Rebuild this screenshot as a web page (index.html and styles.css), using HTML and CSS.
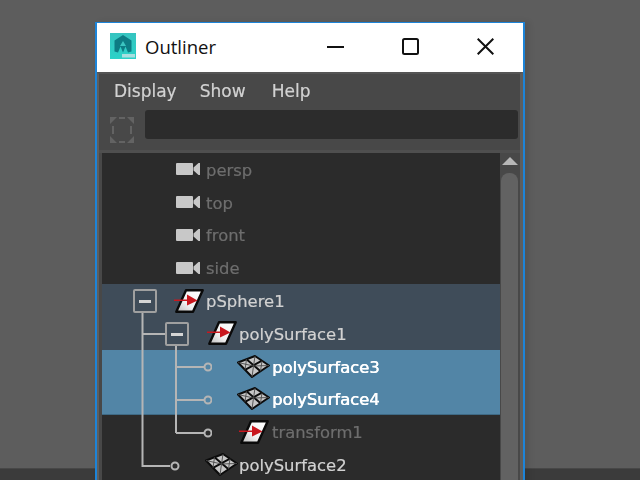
FILE: index.html
```html
<!DOCTYPE html>
<html lang="en">
<head>
<meta charset="utf-8">
<title>Outliner</title>
<link rel="stylesheet" href="styles.css">
</head>
<body>
<div class="desktop">
  <div class="floor"></div>
  <section class="window">
    <header class="titlebar">
      <svg class="app-icon" viewBox="0 0 26 26">
        <defs><linearGradient id="teal" x1="0" y1="0" x2="0" y2="1"><stop offset="0" stop-color="#36c4c0"/><stop offset="1" stop-color="#2bd2c8"/></linearGradient></defs>
        <rect width="26" height="26" fill="url(#teal)"/>
        <path d="M13 2l8.500 5.500v11l-3.500 1-2.500-6-2.500 6-2.500-6-2.500 6-3.500-1v-11z" fill="#0d7c84"/>
        <path d="M13 8l3 5h-6z" fill="#3cc4c0"/>
        <rect x="12" y="21" width="13" height="3.500" fill="#a9dfe0"/>
      </svg>
      <span class="title">Outliner</span>
      <div class="controls">
        <svg class="ctl" viewBox="0 0 17 17"><path d="M0 9h17"/></svg>
        <svg class="ctl" viewBox="0 0 17 17"><rect x="1" y="1" width="15" height="15" rx="1.500"/></svg>
        <svg class="ctl" viewBox="0 0 17 17"><path d="M.7.700l15.600 15.600M16.300.700L.7 16.300"/></svg>
      </div>
    </header>
    <div class="panel">
      <nav class="menu"><span>Display</span><span class="menu-wide">Show</span><span>Help</span></nav>
      <div class="filter">
        <svg class="filter-icon" viewBox="0 0 24 26">
          <path class="fi-t" d="M0 0h7L0 7zM24 0v7L17 0zM0 26v-7l7 7zM24 26h-7l7-7z"/>
          <path class="fi-l" d="M3 9v8M21 9v8M9 1h6M9 25h6"/>
        </svg>
        <div class="search"></div>
      </div>
      <div class="body">
        <div class="tree">
          <div class="row cam-row dim"><svg class="cam"><use href="#camera"/></svg><span>persp</span></div>
          <div class="row cam-row dim"><svg class="cam"><use href="#camera"/></svg><span>top</span></div>
          <div class="row cam-row dim"><svg class="cam"><use href="#camera"/></svg><span>front</span></div>
          <div class="row cam-row dim"><svg class="cam"><use href="#camera"/></svg><span>side</span></div>
          <div class="row l2 slate"><svg class="xf"><use href="#xform"/></svg><span>pSphere1</span></div>
          <div class="row l3 slate"><svg class="xf"><use href="#xform"/></svg><span>polySurface1</span></div>
          <div class="row l4 sel"><svg class="mesh"><use href="#meshicon"/></svg><span>polySurface3</span></div>
          <div class="row l4 sel"><svg class="mesh"><use href="#meshicon"/></svg><span>polySurface4</span></div>
          <div class="row l4b dim"><svg class="xf"><use href="#xform"/></svg><span>transform1</span></div>
          <div class="row l3b"><svg class="mesh"><use href="#meshicon"/></svg><span>polySurface2</span></div>
          <svg class="wires" viewBox="0 0 110 327">
            <path d="M40.500 160V313H68M74 193V280M74 214H102M74 247H102M74 280H102M41 181H63"/>
            <circle cx="106" cy="214" r="3.500"/>
            <circle cx="106" cy="247" r="3.500"/>
            <circle cx="106" cy="280" r="3.500"/>
            <circle cx="73" cy="313" r="3.500"/>
          </svg>
          <div class="toggle t1"></div>
          <div class="toggle t2"></div>
        </div>
        <div class="scrollbar">
          <div class="arrow"></div>
          <div class="thumb"></div>
        </div>
      </div>
    </div>
  </section>
</div>
<svg class="defs" width="0" height="0">
  <defs>
    <linearGradient id="sheet" x1="1" y1="0" x2="0" y2="1"><stop offset="0" stop-color="#ffffff"/><stop offset=".6" stop-color="#f2f2f2"/><stop offset="1" stop-color="#bdbdbd"/></linearGradient>
  </defs>
  <symbol id="camera" viewBox="0 0 24 12">
    <rect x="0" y="0" width="17" height="12" rx="1" fill="#c8c8c8"/>
    <path d="M17.500 4.500l5-4.500h1.500v12h-1.500l-5-4.500z" fill="#c8c8c8"/>
  </symbol>
  <symbol id="xform" viewBox="0 0 30 24">
    <path d="M12 1.300h16.700L19 22.700H2.300z" fill="url(#sheet)" stroke="#0a0a0a" stroke-width="2.400" stroke-linejoin="round"/>
    <path d="M0 10.500l13 0v-5l10.500 6-10.500 5v-4.500H0z" fill="#c9171e"/>
  </symbol>
  <symbol id="meshicon" viewBox="0 0 33 23">
    <path d="M18 1L32 10.500 15 22 1 7.500z" fill="#c6c6c6" stroke="#0c0c0c" stroke-width="2" stroke-linejoin="round"/>
    <path d="M9.500 4.200L23.500 16.200M25 5.700L8 14.800" fill="none" stroke="#0c0c0c" stroke-width="2"/>
    <path d="M1 7.500L16.500 11M18 1L16.500 11M32 10.500L16.500 11M15 22L16.500 11M9.500 4.200L8 14.800M25 5.700L23.500 16.200" fill="none" stroke="#4a4a4a" stroke-width=".9"/>
  </symbol>
</svg>
</body>
</html>
```
FILE: styles.css
```css
* { box-sizing: border-box; }
html, body { margin: 0; padding: 0; height: 100%; overflow: hidden; }
body { background: #5d5d5d; font-family: "DejaVu Sans", sans-serif; }
.desktop { position: relative; width: 640px; height: 480px; overflow: hidden; background: #5d5d5d; }
.floor { position: absolute; left: 0; right: 0; bottom: 0; height: 12px; background: #3b3b3b; border-top: 1px solid #474747; }
.window {
  position: absolute; left: 95px; top: 22px; width: 430px; height: 470px;
  border: solid #1d84d8; border-width: 1px 2px; background: #fff;
  box-shadow: 4px 0 6px rgba(0,0,0,.1);
}
.titlebar { height: 49px; background: #fff; display: flex; align-items: center; padding: 0 0 3px 13px; }
.app-icon { width: 26px; height: 26px; margin-right: 9px; flex: none; }
.title { font-family: "Open Sans", "Noto Sans", sans-serif; font-size: 18.5px; color: #111; }
.controls { margin-left: auto; display: flex; gap: 58px; padding-right: 29px; align-items: center; }
.ctl { width: 17px; height: 17px; fill: none; stroke: #111; stroke-width: 2; }
.panel { height: 421px; overflow: hidden; background: #484848; border: solid #5e5e5e; border-width: 2px 3px 0 2px; border-top-color: #555; display: flex; flex-direction: column; filter: blur(.35px); }
.menu { height: 36px; flex: none; display: flex; align-items: center; gap: 23px; padding: 0 0 2px 15px; font-size: 17px; color: #d2d2d2; -webkit-text-stroke: .2px #d2d2d2; }
.menu-wide { min-width: 49px; }
.filter { height: 43px; flex: none; display: flex; align-items: flex-start; border-bottom: 3px solid #4f4f4f; }
.filter-icon { width: 24px; height: 26px; margin: 7px 0 0 11px; flex: none; }
.fi-t { fill: #636363; }
.fi-l { fill: none; stroke: #636363; stroke-width: 2; }
.search { flex: 1; height: 29px; margin: 0 2px 0 11px; background: #2c2c2c; border-radius: 3px; }
.body { flex: 1; min-height: 0; display: flex; padding-left: 3px; }
.tree { position: relative; width: 398px; background: #2b2b2b; }
.row { height: 32.8px; display: flex; align-items: center; font-size: 16.4px; color: #d2d2d2; -webkit-text-stroke: .2px currentColor; }
.row span { white-space: nowrap; padding-top: 2px; }
.dim span { color: #6e6e6e; }
.slate { background: #3f4c59; }
.sel { background: #5285a6; color: #fff; text-shadow: .4px 0 0 #fff; }
.sel + .sel { box-shadow: inset 0 -1px 0 #3f6a85; }
.cam-row { padding-left: 73.500px; }
.l2 { padding-left: 72px; }
.l3 { padding-left: 105px; }
.l4 { padding-left: 135px; }
.l4b { padding-left: 137px; }
.l3b { padding-left: 103px; }
.cam { width: 24px; height: 12px; margin-right: 6.500px; }
.xf { width: 30px; height: 24px; margin-right: 2px; }
.l4b .xf { margin-right: 3px; }
.mesh { width: 33px; height: 23px; margin-right: 2px; }
.l3b .mesh { margin-right: 1px; }
.wires { position: absolute; left: 0; top: 0; width: 110px; height: 327px; fill: none; stroke: #b5b5b5; stroke-width: 2; }
.toggle { position: absolute; width: 24px; height: 24px; border: 2px solid #a0a0a0; border-radius: 2px; background: #3f4c59; }
.toggle::after { content: ""; position: absolute; left: 4px; right: 4px; top: 8.500px; height: 3px; background: #d5d5d5; }
.t1 { left: 31px; top: 136px; }
.t2 { left: 63px; top: 169px; }
.scrollbar { flex: 1; min-width: 0; background: #484848; padding: 4px 2px 0 1px; }
.arrow { width: 0; height: 0; margin: 0 auto; border: solid transparent; border-width: 0 8px 8px; border-bottom-color: #b8b8b8; }
.thumb { margin-top: 8px; height: 320px; background: #626262; border-radius: 8px 8px 0 0; }
.defs { position: absolute; }
```
